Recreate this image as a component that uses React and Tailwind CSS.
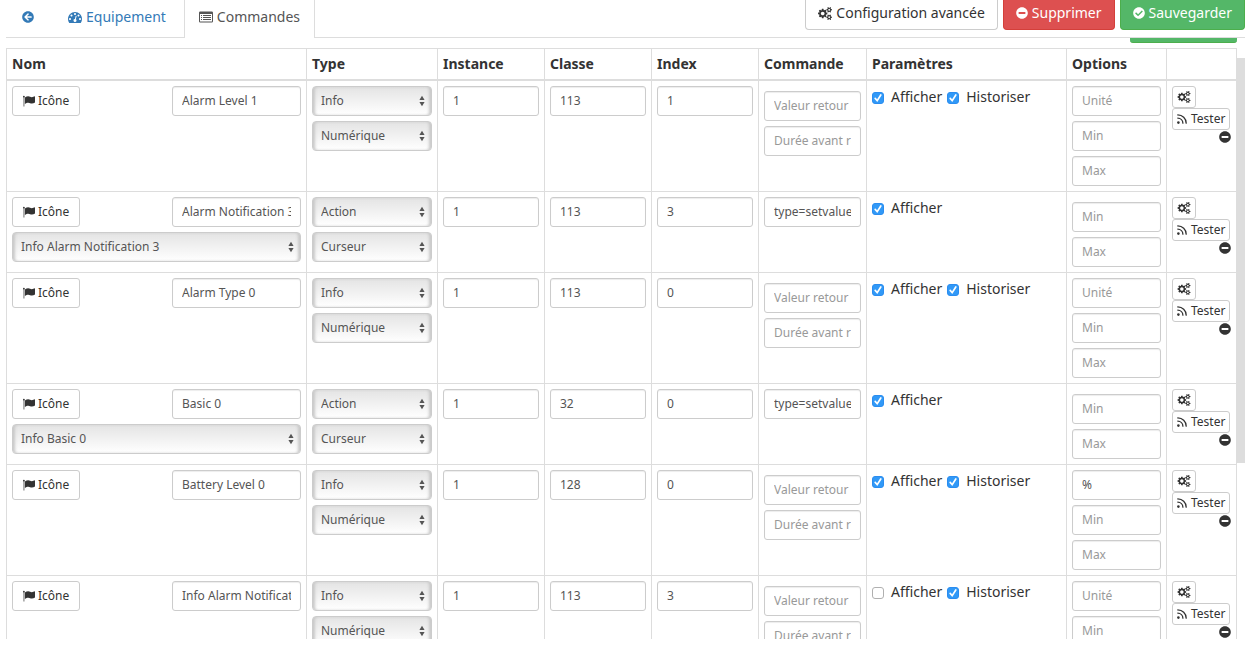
import React, { useState } from 'react';
import { FaArrowCircleLeft, FaCheckCircle, FaMinusCircle } from 'react-icons/fa';

const COMMANDS = [
  { name: 'Alarm Level 1', type: 'Info', subType: 'Numérique', classe: '113', index: '1', show: true, history: true },
  { name: 'Alarm Notification 3', type: 'Action', subType: 'Curseur', classe: '113', index: '3', show: true, info: 'Info Alarm Notification 3', value: 'type=setvalue' },
  { name: 'Alarm Type 0', type: 'Info', subType: 'Numérique', classe: '113', index: '0', show: true, history: true },
  { name: 'Basic 0', type: 'Action', subType: 'Curseur', classe: '32', index: '0', show: true, info: 'Info Basic 0', value: 'type=setvalue' },
  { name: 'Battery Level 0', type: 'Info', subType: 'Numérique', classe: '128', index: '0', show: true, history: true, unit: '%' },
  { name: 'Info Alarm Notification 3', type: 'Info', subType: 'Numérique', classe: '113', index: '3', show: false, history: true },
];

// --- Icons ---
function CogsIcon({ className }) {
  return (
    <svg viewBox="0 0 1920 1792" fill="currentColor" className={className} aria-hidden="true">
      <path d="M896 896q0-106-75-181t-181-75-181 75-75 181 75 181 181 75 181-75 75-181zm768 512q0-52-38-90t-90-38-90 38-38 90q0 53 37.5 90.5t90.5 37.5 90.5-37.5 37.5-90.5zm0-1024q0-52-38-90t-90-38-90 38-38 90q0 53 37.5 90.5t90.5 37.5 90.5-37.5 37.5-90.5zm-384 421v185q0 10-7 19.5t-16 10.5l-155 24q-11 35-32 76 34 48 90 115 7 11 7 20 0 12-7 19-23 30-82.5 89.5t-78.5 59.5q-11 0-21-7l-115-90q-37 19-77 31-11 108-23 155-7 24-30 24h-186q-11 0-20-7.5t-10-17.5l-23-153q-34-10-75-31l-118 89q-7 7-20 7-11 0-21-8-144-133-144-160 0-9 7-19 10-14 41-53t47-61q-23-44-35-82l-152-24q-10-1-17-9.5t-7-19.5v-185q0-10 7-19.5t16-10.5l155-24q11-35 32-76-34-48-90-115-7-11-7-20 0-12 7-20 22-30 82-89t79-59q11 0 21 7l115 90q34-18 77-32 11-108 23-154 7-24 30-24h186q11 0 20 7.5t10 17.5l23 153q34 10 75 31l118-89q8-7 20-7 11 0 21 8 144 133 144 160 0 8-7 19-12 16-42 54t-45 60q23 48 34 82l152 23q10 2 17 10.5t7 19.5zm640 533v140q0 16-149 31-12 27-30 52 51 113 51 138 0 4-4 7-122 71-124 71-8 0-46-47t-52-68q-20 2-30 2t-30-2q-14 21-52 68t-46 47q-2 0-124-71-4-3-4-7 0-25 51-138-18-25-30-52-149-15-149-31v-140q0-16 149-31 13-29 30-52-51-113-51-138 0-4 4-7 4-2 35-20t59-34 30-16q8 0 46 46.5t52 67.5q20-2 30-2t30 2q51-71 92-112l6-2q4 0 124 70 4 3 4 7 0 25-51 138 17 23 30 52 149 15 149 31zm0-1024v140q0 16-149 31-12 27-30 52 51 113 51 138 0 4-4 7-122 71-124 71-8 0-46-47t-52-68q-20 2-30 2t-30-2q-14 21-52 68t-46 47q-2 0-124-71-4-3-4-7 0-25 51-138-18-25-30-52-149-15-149-31v-140q0-16 149-31 13-29 30-52-51-113-51-138 0-4 4-7 4-2 35-20t59-34 30-16q8 0 46 46.5t52 67.5q20-2 30-2t30 2q51-71 92-112l6-2q4 0 124 70 4 3 4 7 0 25-51 138 17 23 30 52 149 15 149 31z" />
    </svg>
  );
}

function DashboardIcon({ className }) {
  return (
    <svg viewBox="0 0 1792 1792" fill="currentColor" className={className} aria-hidden="true">
      <path d="M384 1152q0-53-37.5-90.5t-90.5-37.5-90.5 37.5-37.5 90.5 37.5 90.5 90.5 37.5 90.5-37.5 37.5-90.5zm192-448q0-53-37.5-90.5t-90.5-37.5-90.5 37.5-37.5 90.5 37.5 90.5 90.5 37.5 90.5-37.5 37.5-90.5zm428 481l101-382q6-26-7.5-48.5t-38.5-29.5-48 6.5-30 39.5l-101 382q-60 5-107 43.5t-63 98.5q-20 77 20 146t117 89 146-20 89-117q16-60-6-117t-72-91zm660-33q0-53-37.5-90.5t-90.5-37.5-90.5 37.5-37.5 90.5 37.5 90.5 90.5 37.5 90.5-37.5 37.5-90.5zm-640-640q0-53-37.5-90.5t-90.5-37.5-90.5 37.5-37.5 90.5 37.5 90.5 90.5 37.5 90.5-37.5 37.5-90.5zm448 192q0-53-37.5-90.5t-90.5-37.5-90.5 37.5-37.5 90.5 37.5 90.5 90.5 37.5 90.5-37.5 37.5-90.5zm320 448q0 261-141 483-19 29-54 29h-1402q-35 0-54-29-141-221-141-483 0-182 71-348t191-286 286-191 348-71 348 71 286 191 191 286 71 348z" />
    </svg>
  );
}

function ListIcon({ className }) {
  return (
    <svg viewBox="0 0 14 14" fill="currentColor" className={className} aria-hidden="true">
      <path fillRule="evenodd" d="M1.2 1.5h11.6A1.2 1.2 0 0 1 14 2.7v8.6a1.2 1.2 0 0 1-1.2 1.2H1.2A1.2 1.2 0 0 1 0 11.3V2.7a1.2 1.2 0 0 1 1.2-1.2zM1 4v7.2q0 .3.3.3h11.4q.3 0 .3-.3V4z" />
      <path d="M2 5h1v1H2zM4 5h8v1H4zM2 7h1v1H2zM4 7h8v1H4zM2 9h1v1H2zM4 9h8v1H4z" />
    </svg>
  );
}

function FlagIcon({ className }) {
  return (
    <svg viewBox="0 0 12 12" fill="currentColor" className={className} aria-hidden="true">
      <circle cx="0.9" cy="1.6" r="0.9" />
      <path d="M0.6 2h0.7v9.6H0.6zM1.9 2.4C3 1.8 4.100 1.300 5.200 1.300C6.700 1.300 7.500 2.300 8.800 2.300C9.900 2.300 11 1.500 11.500 1.300Q12 1.200 12 1.700V7.500C11 8.100 10 8.600 8.900 8.600C7.500 8.600 6.800 7.700 5.300 7.700C4.100 7.700 3 8.300 1.900 8.900z" />
    </svg>
  );
}

function FeedIcon({ className }) {
  return (
    <svg viewBox="0 0 10 10" fill="none" stroke="currentColor" strokeWidth="1.3" strokeLinecap="round" className={className} aria-hidden="true">
      <circle cx="1.4" cy="8.6" r="1.3" fill="currentColor" stroke="none" />
      <path d="M0.8 4.100A5.200 5.200 0 0 1 5.900 9.200M0.800 0.900A8.400 8.400 0 0 1 9.200 9.200" />
    </svg>
  );
}

// --- Form controls ---
function TextField({ className = '', label, value = '', placeholder }) {
  const [text, setText] = useState(value);
  return (
    <input
      type="text"
      aria-label={label}
      className={`block h-[30px] rounded-[3px] border border-[#ccc] bg-white px-[9px] pb-[2px] text-xs text-[#555] shadow-[inset_0_1px_1px_rgba(0,0,0,0.075)] placeholder:text-[#999] ${className}`}
      value={text}
      placeholder={placeholder}
      onChange={(e) => setText(e.target.value)}
    />
  );
}

function SelectField({ label, value, options }) {
  const [selected, setSelected] = useState(value);
  return (
    <div className="relative">
      <select
        aria-label={label}
        className="block h-[30px] w-full appearance-none rounded border border-[#ccc] bg-linear-to-b from-[#e4e4e4] to-white pr-5 pl-2 text-xs text-[#555] shadow-[inset_3px_0_3px_-1px_#c8c8c8,inset_-3px_0_3px_-1px_#c8c8c8]"
        value={selected}
        onChange={(e) => setSelected(e.target.value)}
      >
        {options.map((option) => <option key={option}>{option}</option>)}
      </select>
      <svg viewBox="0 0 6 12" fill="#555" className="pointer-events-none absolute top-[9px] right-[7px] h-3 w-[6px]" aria-hidden="true">
        <path d="M3 0.8L5.6 5H0.4zM3 11.2L0.4 7h5.200z" />
      </svg>
    </div>
  );
}

function CheckField({ label, defaultChecked }) {
  return (
    <label className="flex items-center gap-[7px]">
      <span className="relative mt-px block h-3 w-3">
        <input type="checkbox" defaultChecked={defaultChecked} className="peer block h-3 w-3 appearance-none rounded-[3px] border border-[#b0b0b0] bg-white checked:border-[#2b8df0] checked:bg-[#3199f7]" />
        <svg viewBox="0 0 12 12" className="pointer-events-none absolute inset-0 hidden peer-checked:block" fill="none" stroke="white" strokeWidth="1.7" strokeLinecap="round" aria-hidden="true">
          <path d="M3.2 6.4L5.2 8.7L8.8 3" />
        </svg>
      </span>
      {label}
    </label>
  );
}

function CommandRow({ command }) {
  const isInfo = command.type === 'Info';
  const cell = 'border border-[#ddd] p-[5px] align-top';
  return (
    <tr>
      <td className={cell}>
        <div className="flex justify-between">
          <button className="flex h-[30px] items-center gap-[3px] rounded-[3px] border border-[#ccc] bg-white px-[10px] text-xs text-[#333]">
            <FlagIcon className="h-3 w-3" />Icône
          </button>
          <TextField label="Nom" className="w-[129px]" value={command.name} />
        </div>
        {command.info && (
          <div className="mt-[5px]">
            <SelectField label="Info" value={command.info} options={[command.info]} />
          </div>
        )}
      </td>
      <td className={cell}>
        <div className="mb-[5px] flex flex-col gap-[5px]">
          <SelectField label="Type" value={command.type} options={['Info', 'Action']} />
          <SelectField label="Sous-type" value={command.subType} options={['Numérique', 'Curseur']} />
        </div>
      </td>
      <td className={cell}><TextField label="Instance" className="w-full" value="1" /></td>
      <td className={cell}><TextField label="Classe" className="w-full" value={command.classe} /></td>
      <td className={cell}><TextField label="Index" className="w-full" value={command.index} /></td>
      <td className={cell}>
        {isInfo ? (
          <div className="mt-[5px] flex flex-col gap-[5px]">
            <TextField label="Valeur retour" className="w-full" placeholder="Valeur retour d'état" />
            <TextField label="Durée avant retour" className="w-full" placeholder="Durée avant retour" />
          </div>
        ) : (
          <TextField label="Commande" className="w-full" value={command.value} />
        )}
      </td>
      <td className={cell}>
        <div className="flex gap-[5px] pt-px">
          <CheckField label="Afficher" defaultChecked={command.show} />
          {isInfo && <CheckField label="Historiser" defaultChecked={command.history} />}
        </div>
      </td>
      <td className={cell}>
        {isInfo && <TextField label="Unité" className="w-full" placeholder="Unité" value={command.unit} />}
        <TextField label="Min" className="mt-[5px] w-full" placeholder="Min" />
        <TextField label="Max" className="mt-[5px] w-full" placeholder="Max" />
      </td>
      <td className={cell}>
        <div className="flex flex-col items-start">
          <button aria-label="Configurer" className="flex h-[22px] items-center rounded-[3px] border border-[#ccc] bg-white px-1 pb-px text-[#333]">
            <CogsIcon className="h-3 w-[14px]" />
          </button>
          <button className="flex h-[22px] items-center gap-1 rounded-[3px] border border-[#ccc] bg-white px-1 text-xs text-[#333]">
            <FeedIcon className="h-[10px] w-[10px]" />Tester
          </button>
          <button aria-label="Retirer" className="mt-px self-end">
            <FaMinusCircle className="h-3 w-3" />
          </button>
        </div>
      </td>
    </tr>
  );
}

export default function App() {
  const heading = 'border border-b-2 border-[#ddd] p-[5px] text-left font-bold';
  return (
    <div className="flex h-screen flex-col bg-white pr-[6px] pb-[19px] pl-[6px] font-['Noto_Sans',sans-serif] text-sm/5 text-[#333]">
      {/* Tabs and page actions */}
      <header className="flex h-[38px] shrink-0 justify-between border-b border-[#ddd]">
        <nav className="flex h-[38px] text-[#337ab7]">
          <a href="#retour" aria-label="Retour" className="flex items-center px-4 pb-1">
            <FaArrowCircleLeft className="h-3 w-3" />
          </a>
          <a href="#equipement" className="flex items-center gap-1 pr-[18px] pb-1 pl-[18px]">
            <DashboardIcon className="h-[14px] w-[14px]" />Equipement
          </a>
          <a href="#commandes" className="flex items-center gap-1 border-x border-[#ddd] bg-white px-[14px] pb-1 text-[#555]">
            <ListIcon className="h-[14px] w-[14px]" />Commandes
          </a>
        </nav>
        <div className="flex items-start gap-[5px]">
          <button className="flex h-[30px] items-center gap-1 rounded-b border border-t-0 border-[#ccc] bg-white px-3 pb-[3px]">
            <CogsIcon className="h-[13px] w-[14px]" />Configuration avancée
          </button>
          <button className="flex h-[30px] items-center gap-1 rounded-b border border-t-0 border-[#d43f3a] bg-[#dd5050] px-3 pb-[3px] text-white">
            <FaMinusCircle className="h-3 w-3" />Supprimer
          </button>
          <button className="flex h-[30px] items-center gap-1 rounded-b border border-t-0 border-[#4cae4c] bg-[#54b768] px-3 pb-[3px] text-white">
            <FaCheckCircle className="h-3 w-3" />Sauvegarder
          </button>
        </div>
      </header>

      {/* Scrolling list of commands */}
      <main className="flex min-h-0 flex-1 overflow-hidden">
        <div className="min-w-0 flex-1">
          <div className="mb-[5px] ml-auto h-[5px] w-[107px] rounded-b-[3px] border-b border-[#4cae4c] bg-[#54b768]" />
          <table className="w-full table-fixed border-collapse">
            <colgroup>
              <col />
              <col className="w-[131px]" />
              <col className="w-[107px]" />
              <col className="w-[107px]" />
              <col className="w-[107px]" />
              <col className="w-[108px]" />
              <col className="w-[200px]" />
              <col className="w-[100px]" />
              <col className="w-[70px]" />
            </colgroup>
            <thead>
              <tr>
                <th className={heading}>Nom</th>
                <th className={heading}>Type</th>
                <th className={heading}>Instance</th>
                <th className={heading}>Classe</th>
                <th className={heading}>Index</th>
                <th className={heading}>Commande</th>
                <th className={heading}>Paramètres</th>
                <th className={heading}>Options</th>
                <th className={heading}></th>
              </tr>
            </thead>
            <tbody>
              {COMMANDS.map((command) => <CommandRow key={command.name} command={command} />)}
            </tbody>
          </table>
        </div>
        {/* Scrollbar thumb */}
        <div className="mt-5 h-[405px] w-2 shrink-0 bg-[#ddd]" />
      </main>
    </div>
  );
}
